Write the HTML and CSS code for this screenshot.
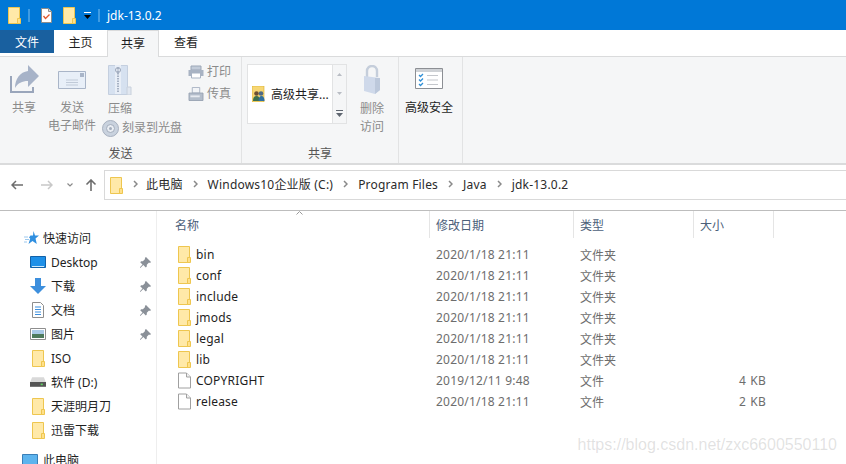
FILE: index.html
```html
<!DOCTYPE html>
<html lang="zh">
<head>
<meta charset="utf-8">
<title>jdk-13.0.2</title>
<link rel="stylesheet" href="styles.css">
</head>
<body>
<svg class="defs" width="0" height="0" aria-hidden="true">
  <symbol id="folder" viewBox="0 0 13 17">
    <path d="M.5.500h11v16H.5z" fill="#ffe699" stroke="#eec64f"/>
    <path d="M1 1h10v15H1z" fill="#ffe9a8"/>
    <path d="M9.500 11.500h3v5h-3z" fill="#ffe08a" stroke="#eec64f"/>
  </symbol>
  <symbol id="file" viewBox="0 0 13 16">
    <path d="M.5.500h8l4 4v11H.5z" fill="#fff" stroke="#a0a0a0"/>
    <path d="M8.500.500v4h4" fill="#f2f2f2" stroke="#a0a0a0"/>
  </symbol>
  <symbol id="pin" viewBox="0 0 11 11">
    <path d="M6 0l5 5-1 1-1-.4-2.200 2.200v1.700l-1 1L3.300 8 .8 10.600 0 11v-.8L2.500 7.500.2 5.200l1-1h1.700L5.100 2 4.800 1z" fill="#8a9098"/>
  </symbol>
  <symbol id="chev" viewBox="0 0 5 8">
    <path d="M1 1l3 3-3 3" fill="none" stroke="#8a8a8a" stroke-width="1.500"/>
  </symbol>
</svg>

<div class="window">
  <header class="titlebar">
    <svg class="q-folder"><use href="#folder"/></svg>
    <span class="q-sep"></span>
    <svg class="q-doc" viewBox="0 0 11 15"><path d="M.5.500h7l3 3v11H.5z" fill="#fff" stroke="#8c8c8c"/><path d="M7.500.500v3h3" fill="#ddd" stroke="#8c8c8c"/><path d="M2.500 8l2 2.500L8.500 6.500" fill="none" stroke="#e2572b" stroke-width="1.300"/></svg>
    <svg class="q-folder q-folder2"><use href="#folder"/></svg>
    <svg class="q-drop" viewBox="0 0 7 7"><path d="M0 0h7v1H0z" fill="#fff"/><path d="M0 3h7L3.500 7z" fill="#000"/></svg>
    <span class="q-sep q-sep2"></span>
    <span class="title">jdk-13.0.2</span>
  </header>

  <nav class="tabs">
    <span class="tab tab-file">文件</span>
    <span class="tab tab-home">主页</span>
    <span class="tab tab-share">共享</span>
    <span class="tab tab-view">查看</span>
  </nav>

  <section class="ribbon">
    <div class="group group-send">
      <div class="group-body">
        <div class="cmd cmd-share">
          <svg class="ic-share" viewBox="0 0 29 28"><path d="M1 11v16h22v-5" fill="none" stroke="#9aa6bb" stroke-width="2"/><path d="M18 0l11 11-11 11v-6c-6 0-10 2-13 7 0-9 5-16 13-17z" fill="#a7b3c8"/></svg>
          <span class="lbl">共享</span>
        </div>
        <div class="cmd cmd-mail">
          <svg class="ic-mail" viewBox="0 0 28 18"><path d="M.5.500h27v17H.5z" fill="#e8eff8" stroke="#a9b5c8"/><path d="M22 2h4v4h-4z" fill="#a9b5c8"/><path d="M8 9h12M8 11.500h12M8 14h12" stroke="#c0cad8"/></svg>
          <span class="lbl">发送</span>
          <span class="lbl">电子邮件</span>
        </div>
        <div class="cmd-stack">
          <div class="cmd cmd-zip">
            <svg class="ic-zip" viewBox="0 0 24 30"><path d="M.5.500h19v29H.5z" fill="#d6e1f0" stroke="#c4cfdf"/><path d="M7 0h6v29H7z" fill="#e8eef7"/><path d="M10 3v25" stroke="#a7b2c4" stroke-width="2" stroke-dasharray="1.500 1"/><circle cx="10" cy="5" r="2.500" fill="none" stroke="#98a4b8"/><path d="M19 22h4v8h-4z" fill="#e1e7f0" stroke="#c8d0dc"/></svg>
            <span class="lbl">压缩</span>
          </div>
          <div class="burn">
            <svg class="ic-disc" viewBox="0 0 17 17"><circle cx="8.500" cy="8.500" r="8" fill="#c9d2de" stroke="#a7b0bf"/><circle cx="8.500" cy="8.500" r="4" fill="#e9edf3" stroke="#a3adbc"/><circle cx="8.500" cy="8.500" r="1.500" fill="#a3adbc"/></svg>
            <span class="lbl">刻录到光盘</span>
          </div>
        </div>
        <div class="cmd-small">
          <div class="small-row">
            <svg class="ic-print" viewBox="0 0 16 13"><path d="M3 .5h10v4H3z" fill="#c3ccd9" stroke="#9ca7b7"/><path d="M.5 4.500h15v6H.5z" fill="#a8b3c3"/><path d="M3.500 7.500h9v5h-9z" fill="#fff" stroke="#a8b3c3"/></svg>
            <span class="lbl">打印</span>
          </div>
          <div class="small-row">
            <svg class="ic-print" viewBox="0 0 16 15"><path d="M4 .5h8v6H4z" fill="#f2f4f7" stroke="#a8b3c3"/><path d="M.5 6.500h15v8H.5z" fill="#b3bdcb" stroke="#98a3b3"/><path d="M2 9h10v2H2z" fill="#e6eaf0"/></svg>
            <span class="lbl">传真</span>
          </div>
        </div>
      </div>
      <div class="group-name">发送</div>
    </div>

    <div class="group group-share">
      <div class="group-body">
        <div class="gallery">
          <div class="gallery-main">
            <svg class="ic-adv" viewBox="0 0 13 16"><path d="M0 0h12v16H0z" fill="#f7d774" stroke="#d6ab2c" stroke-width=".6"/><circle cx="4.500" cy="7.500" r="2.300" fill="#6b4f34"/><circle cx="9" cy="7.500" r="2.300" fill="#4f6a85"/><path d="M1 15c0-3 1-5 3.500-5S8 12 8 15z" fill="#3c6f4e"/><path d="M6.500 15c0-3 1-5 3-5s3 2 3 5z" fill="#2f6f9f"/></svg>
            <span class="gallery-text">高级共享...</span>
          </div>
          <div class="gallery-scroll">
            <span class="g-btn"><svg viewBox="0 0 7 4"><path d="M3.500 0L7 4H0z" fill="#b9bdc4"/></svg></span>
            <span class="g-btn"><svg viewBox="0 0 7 4"><path d="M3.500 4L7 0H0z" fill="#b9bdc4"/></svg></span>
            <span class="g-btn g-more"><svg viewBox="0 0 7 7"><path d="M0 0h7v1H0z" fill="#5f6670"/><path d="M0 3h7L3.500 7z" fill="#5f6670"/></svg></span>
          </div>
        </div>
        <div class="cmd cmd-lock">
          <svg class="ic-lock" viewBox="0 0 18 29"><path d="M4 12V6a5 5 0 0 1 10 0v6" fill="none" stroke="#c5cedb" stroke-width="2.400"/><path d="M1 11l16 2v12l-5 4-11-3z" fill="#cfd9ea"/><path d="M12 13l5 0v12l-5 4z" fill="#bcc8db"/></svg>
          <span class="lbl">删除</span>
          <span class="lbl">访问</span>
        </div>
      </div>
      <div class="group-name">共享</div>
    </div>

    <div class="group group-sec">
      <div class="group-body">
        <div class="cmd cmd-sec">
          <svg class="ic-sec" viewBox="0 0 28 21"><path d="M.5.500h27v20H.5z" fill="#fff" stroke="#8c8f94"/><path d="M1 1h26v3H1z" fill="#cfd2d6"/><path d="M4 7l1.500 1.500L8 6M4 11.500L5.500 13 8 10.500M4 16l1.500 1.500L8 15" fill="none" stroke="#2f8fd6" stroke-width="1.300"/><path d="M12 7.500h11M12 12h11M12 16.500h11" stroke="#c4c7cc"/></svg>
          <span class="lbl-dark">高级安全</span>
        </div>
      </div>
    </div>
  </section>

  <div class="addressbar">
    <div class="nav-btns">
      <svg class="nav-arrow" viewBox="0 0 12 10"><path d="M12 5H1M5 1L1 5l4 4" fill="none" stroke="#6d6d6d" stroke-width="1.500"/></svg>
      <svg class="nav-arrow nav-fwd" viewBox="0 0 12 10"><path d="M0 5h11M7 1l4 4-4 4" fill="none" stroke="#c8c8c8" stroke-width="1.500"/></svg>
      <svg class="nav-down" viewBox="0 0 6 4"><path d="M.5.500L3 3 5.500.500" fill="none" stroke="#8a8a8a" stroke-width="1.200"/></svg>
      <svg class="nav-up" viewBox="0 0 12 12"><path d="M6 12V1M1.500 5.500L6 1l4.500 4.500" fill="none" stroke="#6d6d6d" stroke-width="1.600"/></svg>
    </div>
    <div class="crumbs">
      <svg class="crumb-folder"><use href="#folder"/></svg>
      <svg class="sep"><use href="#chev"/></svg><span>此电脑</span>
      <svg class="sep"><use href="#chev"/></svg><span>Windows10企业版 (C:)</span>
      <svg class="sep"><use href="#chev"/></svg><span>Program Files</span>
      <svg class="sep"><use href="#chev"/></svg><span>Java</span>
      <svg class="sep"><use href="#chev"/></svg><span>jdk-13.0.2</span>
    </div>
  </div>

  <main class="main">
    <aside class="sidebar">
      <div class="side-item side-head"><svg class="s-ic s-star" viewBox="0 0 15 14"><path d="M9.500 0l1.500 4.500H15l-3.500 3 1.300 5.500-4.300-3-4 3 1.700-5.500L5 6.500l1.500-2H9z" fill="#2f8fe0"/><path d="M0 6h4M1 8.500h4M0 11h3" stroke="#9cc8ee"/></svg><span>快速访问</span></div>
      <div class="side-item"><svg class="s-ic" viewBox="0 0 16 12"><path d="M.5.500h15v11H.5z" fill="#1e90e8" stroke="#1261a8"/><path d="M2 10.500h12" stroke="#cfe9fb"/></svg><span class="s-name">Desktop</span><svg class="pin"><use href="#pin"/></svg></div>
      <div class="side-item"><svg class="s-ic s-down" viewBox="0 0 16 16"><path d="M5 0h6v8h5l-8 8-8-8h5z" fill="#3d8fdd"/></svg><span class="s-name">下载</span><svg class="pin"><use href="#pin"/></svg></div>
      <div class="side-item"><svg class="s-ic s-doc" viewBox="0 0 12 16"><path d="M.5.500h8l3 3v12H.5z" fill="#fff" stroke="#8e8e8e"/><path d="M3 5h6M3 7.500h6M3 10h6M3 12.500h6" stroke="#3d8fdd"/></svg><span class="s-name">文档</span><svg class="pin"><use href="#pin"/></svg></div>
      <div class="side-item"><svg class="s-ic" viewBox="0 0 16 12"><path d="M.5.500h15v11H.5z" fill="#fff" stroke="#8e8e8e"/><path d="M2 2h12v4H2z" fill="#a9c9e6"/><path d="M2 6h12v4H2z" fill="#4e7a5c"/></svg><span class="s-name">图片</span><svg class="pin"><use href="#pin"/></svg></div>
      <div class="side-item"><svg class="s-ic s-fold"><use href="#folder"/></svg><span class="s-name">ISO</span></div>
      <div class="side-item"><svg class="s-ic" viewBox="0 0 15 9"><path d="M2 0h11l2 5H0z" fill="#d9d9d9"/><path d="M0 4.500h15V9H0z" fill="#555"/><path d="M10 6h2v1.500h-2z" fill="#5fd35f"/></svg><span class="s-name">软件 (D:)</span></div>
      <div class="side-item"><svg class="s-ic s-fold"><use href="#folder"/></svg><span class="s-name">天涯明月刀</span></div>
      <div class="side-item"><svg class="s-ic s-fold"><use href="#folder"/></svg><span class="s-name">迅雷下载</span></div>
      <div class="side-item side-pc"><svg class="s-ic" viewBox="0 0 16 12"><path d="M.5.500h15v11H.5z" fill="#5db4ee" stroke="#3a7fb8"/></svg><span>此电脑</span></div>
    </aside>
    <div class="list">
      <div class="list-head">
        <span class="h-cell c-name">名称<svg class="sort" viewBox="0 0 7 4"><path d="M.5 3.500l3-3 3 3" fill="none" stroke="#9a9a9a"/></svg></span>
        <span class="h-cell c-date">修改日期</span>
        <span class="h-cell c-type">类型</span>
        <span class="h-cell c-size">大小</span>
      </div>
      <div class="rows">
        <div class="row"><span class="c-name n"><svg class="f-ic"><use href="#folder"/></svg>bin</span><span class="c-date d">2020/1/18 21:11</span><span class="c-type d">文件夹</span></div>
        <div class="row"><span class="c-name n"><svg class="f-ic"><use href="#folder"/></svg>conf</span><span class="c-date d">2020/1/18 21:11</span><span class="c-type d">文件夹</span></div>
        <div class="row"><span class="c-name n"><svg class="f-ic"><use href="#folder"/></svg>include</span><span class="c-date d">2020/1/18 21:11</span><span class="c-type d">文件夹</span></div>
        <div class="row"><span class="c-name n"><svg class="f-ic"><use href="#folder"/></svg>jmods</span><span class="c-date d">2020/1/18 21:11</span><span class="c-type d">文件夹</span></div>
        <div class="row"><span class="c-name n"><svg class="f-ic"><use href="#folder"/></svg>legal</span><span class="c-date d">2020/1/18 21:11</span><span class="c-type d">文件夹</span></div>
        <div class="row"><span class="c-name n"><svg class="f-ic"><use href="#folder"/></svg>lib</span><span class="c-date d">2020/1/18 21:11</span><span class="c-type d">文件夹</span></div>
        <div class="row"><span class="c-name n"><svg class="f-ic"><use href="#file"/></svg>COPYRIGHT</span><span class="c-date d">2019/12/11 9:48</span><span class="c-type d">文件</span><span class="c-size d">4 KB</span></div>
        <div class="row"><span class="c-name n"><svg class="f-ic"><use href="#file"/></svg>release</span><span class="c-date d">2020/1/18 21:11</span><span class="c-type d">文件</span><span class="c-size d">2 KB</span></div>
      </div>
    </div>
  </main>
  <div class="watermark">https://blog.csdn.net/zxc6600550110</div>
</div>
</body>
</html>
```

FILE: styles.css
```css
* { box-sizing: border-box; }
html, body { margin: 0; height: 100%; overflow: hidden; background: #fff; }
body {
  font-family: "Noto Sans", "Noto Sans CJK SC", sans-serif;
  font-size: 12px;
  color: #1e1e1e;
}
svg { display: block; flex: none; }
.defs { position: absolute; }
.window { position: relative; width: 846px; height: 464px; overflow: hidden; display: flex; flex-direction: column; }

/* title bar */
.titlebar { height: 30px; background: #0078d7; display: flex; align-items: center; padding-left: 8px; }
.q-folder { width: 13px; height: 17px; }
.q-sep { width: 2px; height: 13px; margin-left: 7px; background: #3f9ce3; }
.q-doc { width: 11px; height: 15px; margin-left: 11px; }
.q-folder2 { margin-left: 11px; }
.q-drop { width: 7px; height: 7px; margin-left: 8px; }
.q-sep2 { margin-left: 7px; }
.title { margin-left: 7px; color: #fff; }

/* tabs */
.tabs { height: 26px; display: flex; background: #fff; position: relative; z-index: 1; }
.tab { display: flex; align-items: center; justify-content: center; height: 26px; padding-bottom: 2px; }
.tab-file { width: 54px; height: 23px; background: #19609f; color: #fff; padding-bottom: 0; }
.tab-home { width: 53px; }
.tab-share { width: 52px; background: #f5f6f7; border: 1px solid #dadbdc; border-bottom: 0; height: 27px; }
.tab-view { width: 54px; }

/* ribbon */
.ribbon { height: 109px; background: #f5f6f7; border-top: 1px solid #dadbdc; border-bottom: 2px solid #dadbdc; display: flex; color: #8b8b8b; }
.group { border-right: 1px solid #e2e3e4; display: flex; flex-direction: column; height: 106px; }
.group-send { width: 242px; }
.group-share { width: 157px; }
.group-sec { width: 64px; }
.group-body { flex: 1; display: flex; min-height: 0; }
.group-name { height: 20px; text-align: center; line-height: 22px; color: #555; }
.cmd { display: flex; flex-direction: column; align-items: center; width: 48px; }
.lbl { line-height: 18px; white-space: nowrap; }
.ic-share { width: 29px; height: 28px; margin: 8px 0 6px 0; }
.ic-mail { width: 28px; height: 18px; margin: 14px 0 10px; }
.ic-zip { width: 24px; height: 30px; margin: 8px 0 5px; }
.cmd-zip .lbl { line-height: 17px; }
.cmd-stack { width: 90px; display: flex; flex-direction: column; }
.burn { display: flex; align-items: center; gap: 3px; margin: 2px 0 0 6px; }
.ic-disc { width: 17px; height: 17px; }
.cmd-small { display: flex; flex-direction: column; padding: 6px 0 0 2px; gap: 4px; }
.small-row { display: flex; align-items: center; gap: 3px; height: 18px; }
.ic-print { width: 16px; height: 14px; }

.gallery { width: 100px; height: 60px; margin: 7px 0 0 5px; display: flex; border: 1px solid #e2e3e4; background: #fff; }
.gallery-main { flex: 1; display: flex; align-items: center; gap: 6px; padding-left: 4px; color: #1e1e1e; }
.gallery-text { white-space: nowrap; }
.ic-adv { width: 13px; height: 16px; }
.gallery-scroll { width: 14px; background: #f5f6f7; border-left: 1px solid #e2e3e4; display: flex; flex-direction: column; }
.g-btn { height: 19px; display: flex; align-items: center; justify-content: center; }
.g-btn svg { width: 5px; height: 3px; }
.g-more { height: 20px; }
.g-btn.g-more svg { width: 7px; height: 7px; }
.cmd-lock { width: 50px; }
.ic-lock { width: 18px; height: 29px; margin: 8px 0 6px; }
.cmd-sec { width: 60px; }
.ic-sec { width: 28px; height: 21px; margin: 11px 0 10px; }
.lbl-dark { color: #1e1e1e; white-space: nowrap; line-height: 18px; }

/* address bar */
.addressbar { height: 46px; display: flex; padding-top: 5px; border-bottom: 1px solid #bdbdbd; background: #fff; }
.nav-btns { width: 104px; height: 30px; display: flex; align-items: center; padding-left: 11px; }
.nav-arrow { width: 12px; height: 10px; }
.nav-fwd { margin-left: 18px; }
.nav-down { width: 6px; height: 4px; margin-left: 14px; }
.nav-up { width: 12px; height: 12px; margin-left: 12px; }
.crumbs { flex: 1; height: 30px; border: 1px solid #d9d9d9; border-right: 0; display: flex; align-items: center; padding: 0 0 2px 5px; color: #2b2b2b; white-space: nowrap; letter-spacing: .2px; }
.crumb-folder { width: 13px; height: 17px; margin: 2px 10px 0 0; }
.sep { width: 5px; height: 8px; margin-right: 8px; }
.crumbs span + .sep { margin-left: 10px; margin-right: 10px; }

/* main */
.main { flex: 1; display: flex; min-height: 0; }
.sidebar { width: 157px; border-right: 1px solid #eeeeee; padding-top: 15px; display: flex; flex-direction: column; }
.side-item { height: 24px; flex: none; display: flex; align-items: center; padding-left: 30px; position: relative; }
.s-ic { width: 16px; height: 12px; }
.s-name { margin-left: 5px; flex: 1; }
.s-doc { width: 12px; height: 16px; margin: 0 2px; }
.s-down { height: 16px; }
.s-fold { width: 13px; height: 17px; margin: 0 1px 0 2px; }
.side-head { padding-left: 24px; gap: 4px; }
.s-star { width: 15px; height: 14px; }
.side-pc { padding-left: 22px; gap: 5px; margin-top: 6px; }
.pin { width: 11px; height: 11px; margin-right: 5px; }

.list { flex: 1; min-width: 0; }
.list-head { height: 28px; display: flex; color: #4c607a; }
.h-cell { border-right: 1px solid #e5e5e5; display: flex; align-items: center; padding-left: 6px; height: 27px; position: relative; }
.list-head .c-name { width: 273px; padding-left: 18px; }
.list-head .c-date { width: 144px; }
.list-head .c-type { width: 120px; }
.list-head .c-size { width: 80px; }
.sort { position: absolute; left: 139px; top: 0; width: 7px; height: 4px; }
.rows { padding-top: 5px; }
.row { height: 21px; display: flex; align-items: center; letter-spacing: .2px; }
.row .c-name { width: 273px; padding-left: 21px; display: flex; align-items: center; gap: 5px; }
.row .c-date { width: 144px; padding-left: 6px; }
.row .c-type { width: 120px; padding-left: 6px; letter-spacing: 0; }
.row .c-size { width: 72px; text-align: right; word-spacing: 1px; }
.n { color: #1e1e1e; }
.d { color: #6d6d6d; }
.f-ic { width: 13px; height: 17px; }

.watermark { position: absolute; right: 9px; top: 435px; font-family: "Liberation Sans", sans-serif; font-size: 16px; line-height: 20px; color: rgba(120, 120, 120, 0.22); }
```
